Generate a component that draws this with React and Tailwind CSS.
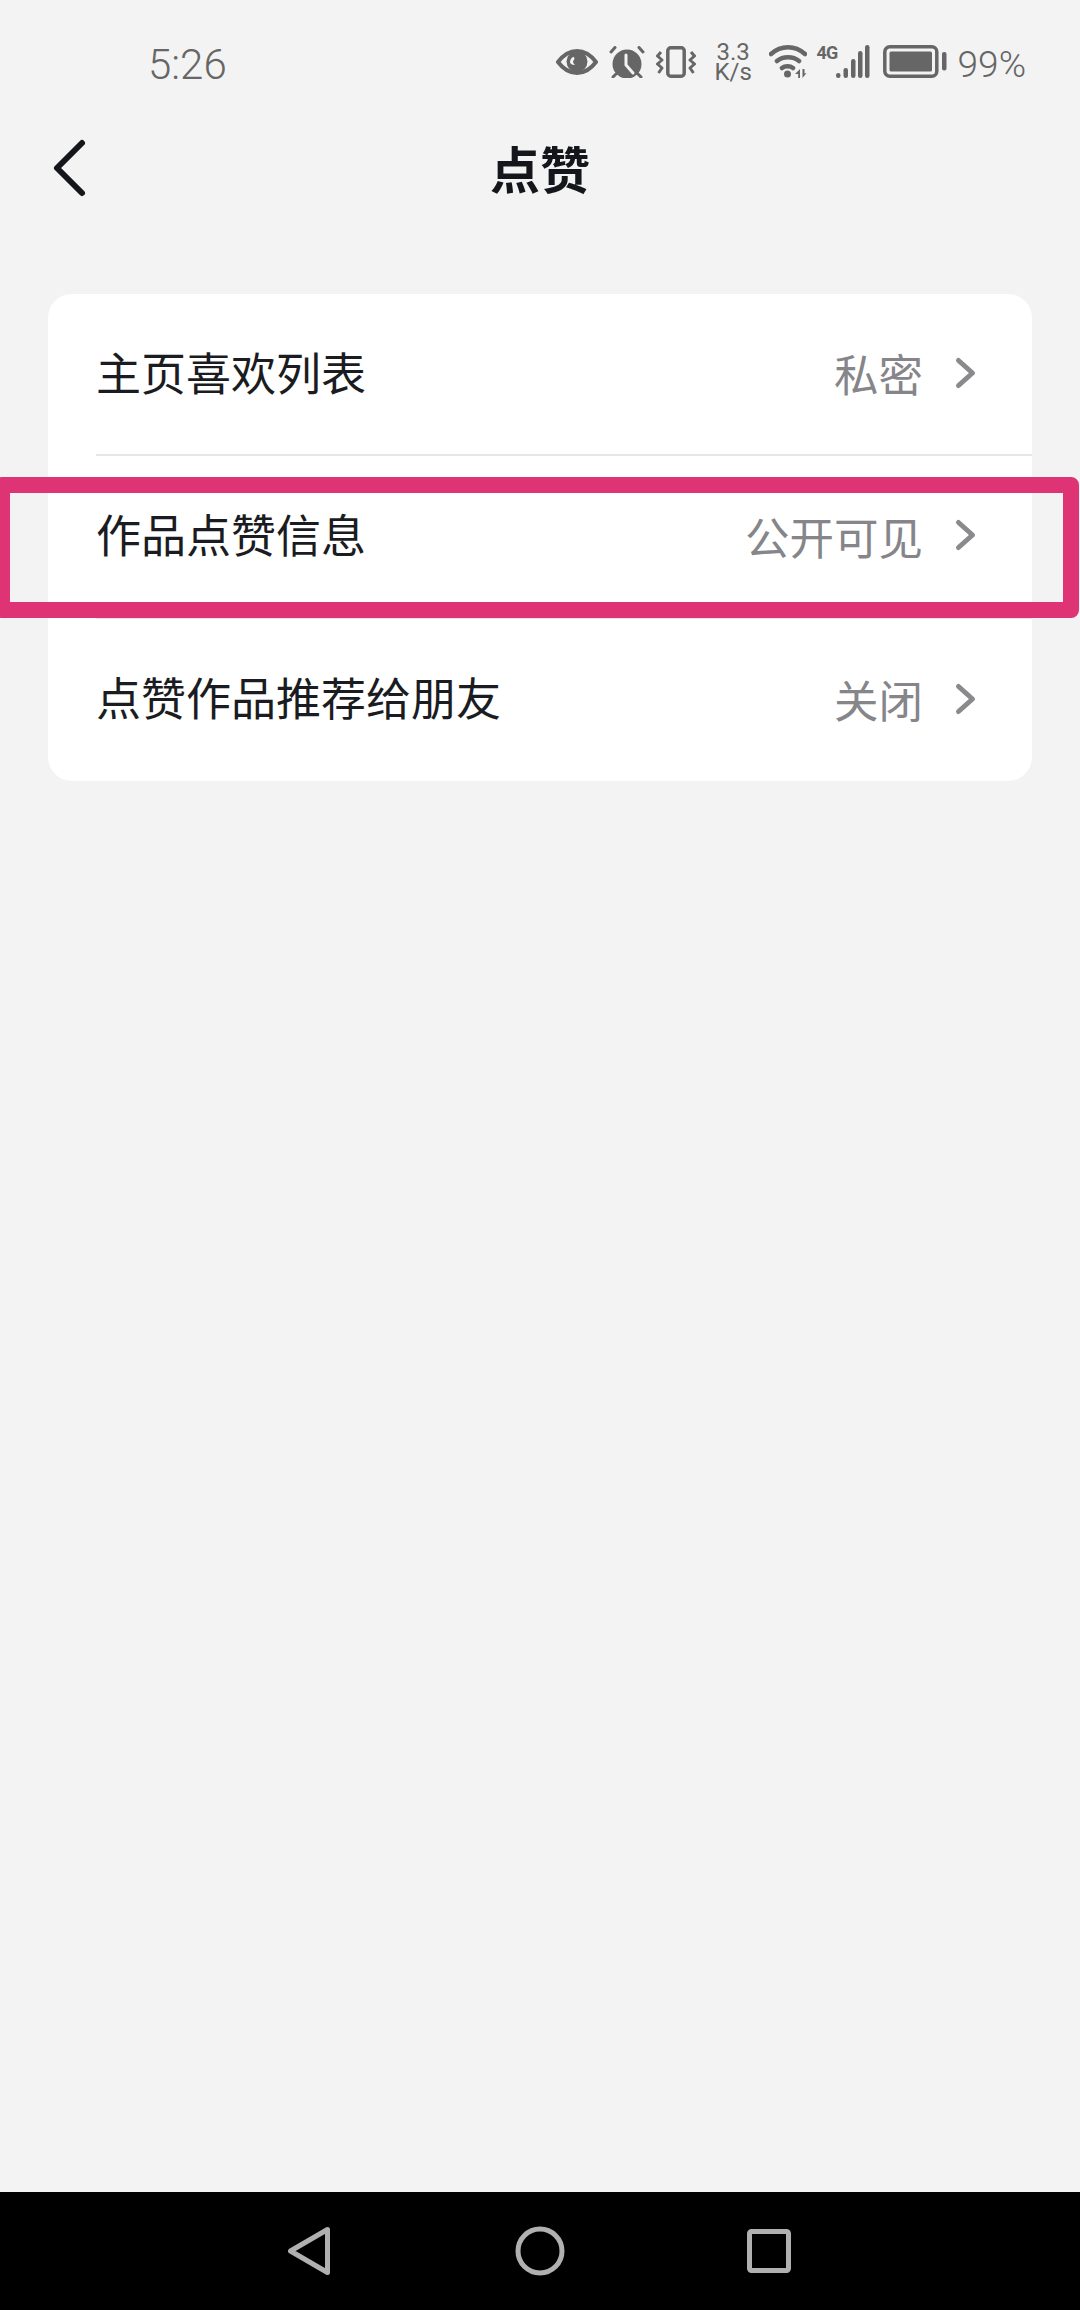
const rows = [
  { label: "主页喜欢列表", value: "私密" },
  { label: "作品点赞信息", value: "公开可见" },
  { label: "点赞作品推荐给朋友", value: "关闭" },
];

function EyeIcon() {
  return (
    <svg width="42" height="26" viewBox="0 0 42 26" fill="none">
      <path d="M2 13C8 5 14 2 21 2s13 3 19 11c-6 8-12 11-19 11S8 21 2 13z" stroke="#666" strokeWidth="4" strokeLinejoin="round" />
      <circle cx="21" cy="12.500" r="10.500" fill="#666" />
      <path d="M14 13c0-3 2-5 4-5 1 2 0 3-1 4 0 2 1 3 2 4-3 0-5-1-5-3z" fill="#f3f3f3" />
    </svg>
  );
}

function AlarmIcon() {
  return (
    <svg width="36" height="32" viewBox="0 0 36 32" fill="none">
      <circle cx="18" cy="18" r="14.500" fill="#666" />
      <path d="M17 9v10l7 8" stroke="#f3f3f3" strokeWidth="3" strokeLinecap="round" />
      <path d="M2 6l4-4.500M34 6l-4-4.500M7 28l-3 3M29 28l3 3" stroke="#666" strokeWidth="3" strokeLinecap="round" />
    </svg>
  );
}

function VibrateIcon() {
  return (
    <svg width="40" height="32" viewBox="0 0 40 32" fill="none">
      <rect x="11.800" y="1.800" width="16.400" height="28.400" rx="3" stroke="#666" strokeWidth="3.500" />
      <path d="M5 6L1.500 10 6 14l-4.500 4L6 22l-3.500 5M35 6l3.500 4L34 14l4.500 4L34 22l3.500 5" stroke="#666" strokeWidth="3" strokeLinejoin="round" />
    </svg>
  );
}

function WifiIcon() {
  return (
    <svg width="38" height="33" viewBox="0 0 38 33" fill="none">
      <path d="M2 9c10-9 24-9 34 0M8 16c6-5 16-5 22 0M13 23c3-2.500 8-2.500 11 0" stroke="#666" strokeWidth="4.500" strokeLinecap="round" />
      <circle cx="18.500" cy="29" r="3.500" fill="#666" />
      <path d="M31 24v9h-1.800v-4H26zM33.500 24v9l4-5-2 .500v-4.500z" fill="#666" />
    </svg>
  );
}

function SignalIcon() {
  return (
    <svg width="34" height="33" viewBox="0 0 34 33" fill="#666">
      <rect x="0" y="28" width="4.500" height="5" rx="2.200" />
      <rect x="7.500" y="23" width="4.500" height="10" rx="2.200" />
      <rect x="15" y="14" width="4.500" height="19" rx="2.200" />
      <rect x="22" y="6" width="4.500" height="27" rx="2.200" />
      <rect x="29" y="0" width="4.500" height="33" rx="2.200" />
    </svg>
  );
}

function BatteryIcon() {
  return (
    <svg width="64" height="33" viewBox="0 0 64 33" fill="none">
      <rect x="1.800" y="1.800" width="52" height="29.400" rx="5" stroke="#666" strokeWidth="3.500" />
      <rect x="6.500" y="6.500" width="42.500" height="20" rx="1.500" fill="#666" />
      <rect x="59" y="7" width="4.500" height="18.500" rx="2" fill="#666" />
    </svg>
  );
}

function RowChevron() {
  return (
    <svg className="ml-[31px] mb-[2px]" width="24" height="36" viewBox="0 0 24 36" fill="none">
      <path d="M4.500 5.500L18.500 18 4.500 30.500" stroke="#8a8a8e" strokeWidth="5" strokeLinecap="round" strokeLinejoin="round" />
    </svg>
  );
}

export default function App() {
  return (
    <div className="relative h-[2310px] w-[1080px] overflow-hidden bg-[#f3f3f3] flex flex-col font-['Noto_Sans_CJK_SC','Noto_Sans',sans-serif]">
      <div className="h-[124px] shrink-0 flex items-center pl-[148px] pr-[54px] pb-[1px] text-[#666]">
        <span className="mt-[7px] font-['Roboto',sans-serif] font-light text-[42px] leading-none">5:26</span>
        <div className="ml-auto flex items-center">
          <EyeIcon />
          <div className="ml-[11px]"><AlarmIcon /></div>
          <div className="ml-[11px]"><VibrateIcon /></div>
          <div className="ml-[19px] w-[37px] flex flex-col items-center font-['Roboto',sans-serif] leading-[20px]">
            <span className="text-[24px]">3.3</span>
            <span className="text-[24px]">K/s</span>
          </div>
          <div className="ml-[17px]"><WifiIcon /></div>
          <div className="ml-[10px] mb-[17px] w-[18px] font-['Roboto',sans-serif] font-bold text-[18px] leading-none -tracking-[1px]">4G</div>
          <div className="ml-[1px]"><SignalIcon /></div>
          <div className="ml-[13px]"><BatteryIcon /></div>
          <span className="ml-[11px] mt-[6px] font-['Roboto',sans-serif] font-light text-[37px] leading-none">99%</span>
        </div>
      </div>

      <div className="relative h-[92px] shrink-0 flex items-center justify-center">
        <svg className="absolute left-[50px] top-[14px]" width="38" height="60" viewBox="0 0 38 60" fill="none">
          <path d="M32 5L7 30l25 25" stroke="#15161c" strokeWidth="6" strokeLinecap="round" strokeLinejoin="round" />
        </svg>
        <h1 className="mb-[7px] text-[50px] leading-none font-bold text-[#15161c]">点赞</h1>
      </div>

      <div className="mx-[48px] mt-[78px] rounded-[24px] bg-white">
        {rows.map((row, i) => (
          <div key={row.label} className="h-[162.300px] pl-[48px]">
            <div className={"h-full flex items-center justify-between pr-[54px] " + (i < 2 ? "border-b-2 border-[#e6e6e6]" : "")}>
              <span className="mb-[6px] text-[45px] leading-none text-[#1a1c22]">{row.label}</span>
              <div className="flex items-center text-[#85858a]">
                <span className="mb-[1px] text-[44.500px] leading-none">{row.value}</span>
                <RowChevron />
              </div>
            </div>
          </div>
        ))}
      </div>

      {/* highlight frame */}
      <div className="absolute left-[-6px] top-[477px] w-[1085px] h-[141px] border-[16px] border-[#de3375] rounded-[8px]" />

      <div className="mt-auto h-[118px] bg-black flex items-center justify-center">
        <svg width="510" height="60" viewBox="0 0 510 60" fill="none" stroke="#b0b0b0" strokeWidth="5" strokeLinejoin="round">
          <path d="M42.500 8.500v43L5.500 30z" />
          <circle cx="255" cy="30" r="22" />
          <rect x="464.500" y="10.500" width="39" height="39" rx="2" />
        </svg>
      </div>
    </div>
  );
}
